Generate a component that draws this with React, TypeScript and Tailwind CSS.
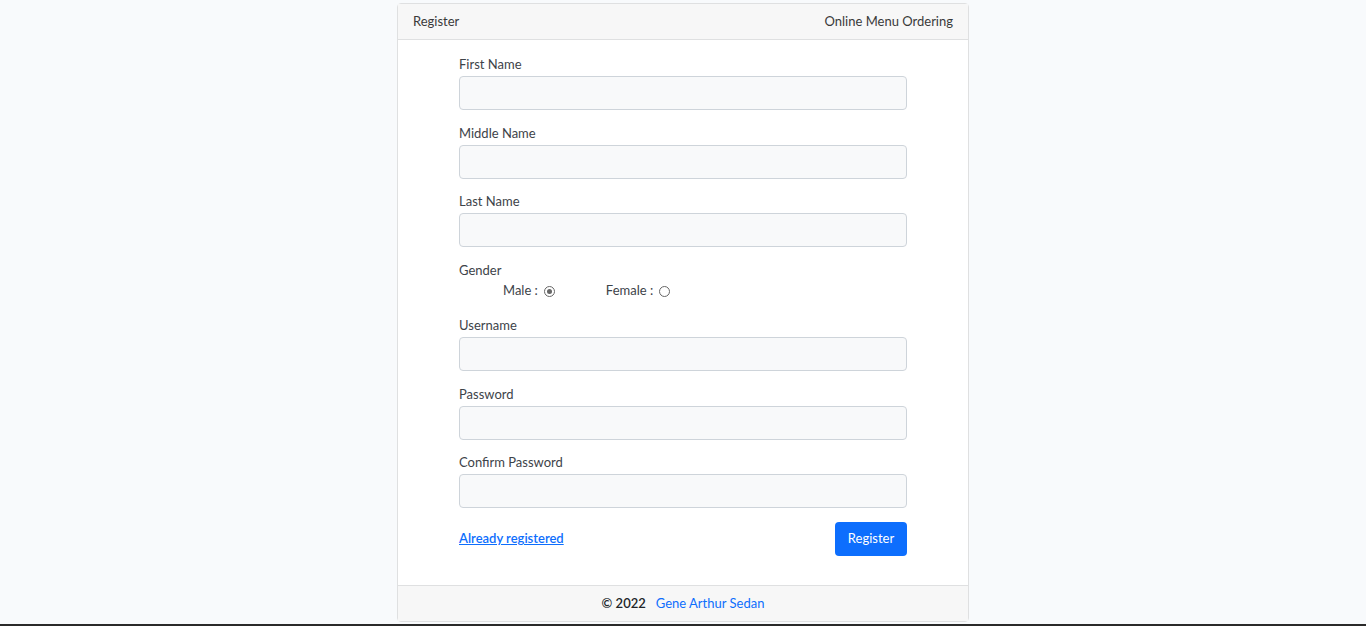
import React from "react";

const font = { fontFamily: "Lato, 'Noto Sans', sans-serif" };

function Field({ label, type = "text" }: { label: string; type?: string }) {
  return (
    <div className="flex flex-col">
      <label className="text-[13px] leading-[16px] text-[#3d4349] mb-[4px]">{label}</label>
      <input
        type={type}
        className="h-[34px] w-full rounded-[4px] border border-[#ced4da] bg-[#f8f9fa] px-3 outline-none"
      />
    </div>
  );
}

export default function App() {
  return (
    <div className="h-[626px] flex flex-col bg-[#f8fafc] overflow-hidden" style={font}>
      <div className="flex-1 flex justify-center pt-[3px]">
        <div className="w-[572px] h-[619px] flex flex-col border border-[#dfe0e1] rounded-[4px] bg-white">
          <div className="h-[36px] shrink-0 flex items-center justify-between px-[15px] bg-[#f7f7f7] border-b border-[#dfe0e1] text-[13px] text-[#3a3a3a]">
            <span>Register</span>
            <span>Online Menu Ordering</span>
          </div>
          <div className="flex-1 flex justify-center pt-[16px]">
            <div className="w-[448px] flex flex-col">
              <div className="flex flex-col gap-[14.5px]">
                <Field label="First Name" />
                <Field label="Middle Name" />
                <Field label="Last Name" />
              </div>
              <div className="mt-[15px] flex flex-col">
                <span className="text-[13px] leading-[16px] text-[#3d4349]">Gender</span>
                <div className="flex items-center mt-[4px] h-[18px] text-[13px] text-[#3d4349]">
                  <label className="ml-[44px] flex items-center">
                    Male :
                    <span className="ml-[6px] w-[11px] h-[11px] rounded-full border border-[#666] flex items-center justify-center">
                      <span className="w-[5px] h-[5px] rounded-full bg-[#666]" />
                    </span>
                  </label>
                  <label className="ml-[51px] flex items-center">
                    Female :
                    <span className="ml-[6px] w-[11px] h-[11px] rounded-full border border-[#666]" />
                  </label>
                </div>
              </div>
              <div className="mt-[17px] flex flex-col gap-[14.5px]">
                <Field label="Username" />
                <Field label="Password" type="password" />
                <Field label="Confirm Password" type="password" />
              </div>
              <div className="mt-[14px] flex items-center justify-between">
                <a href="#" className="text-[13px] text-[#0d6efd] underline font-semibold">Already registered</a>
                <button className="h-[34px] w-[72px] rounded-[4px] bg-[#0d6efd] text-white text-[13px]">Register</button>
              </div>
            </div>
          </div>
          <div className="h-[36px] shrink-0 flex items-center justify-center bg-[#f7f7f7] border-t border-[#dfe0e1] text-[13px]">
            <span className="text-[#212529] font-semibold">© 2022</span>
            <span className="ml-[10px] text-[#0d6efd]">Gene Arthur Sedan</span>
          </div>
        </div>
      </div>
      <div className="h-[2px] bg-[#2a2a2a]" />
    </div>
  );
}
